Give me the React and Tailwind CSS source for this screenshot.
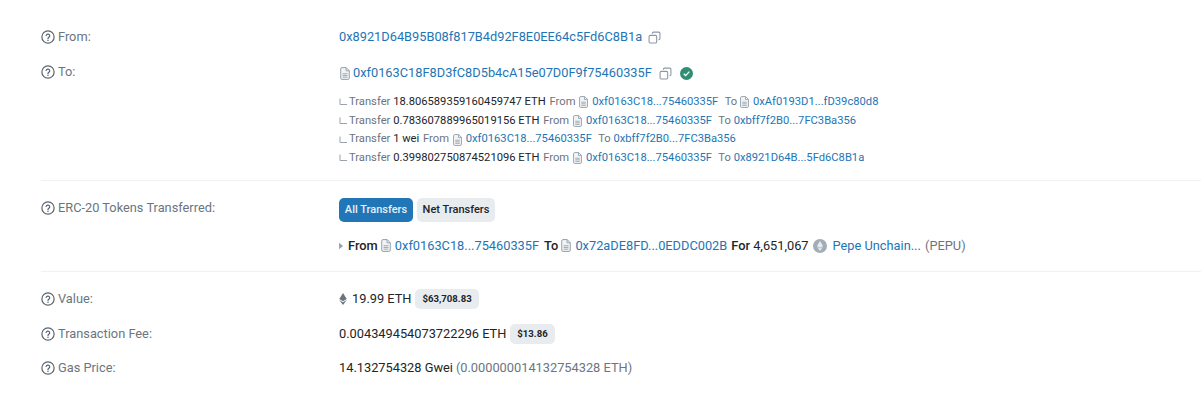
import { Copy } from 'lucide-react';

const LINK = 'text-[#1e75b5]';
const GRAY = 'text-[#6c757e]';
const DARK = 'text-[#212529]';

function Help() {
  return (
    <svg viewBox="0 0 16 16" className="w-[14px] h-[14px] shrink-0 mr-[3px]" fill="none">
      <circle cx="8" cy="8" r="7" stroke="#5c6670" strokeWidth="1.4" />
      <path d="M5.9 6.2a2.1 2.1 0 0 1 4.1.5c0 1.4-2 1.7-2 2.9" stroke="#5c6670" strokeWidth="1.4" strokeLinecap="round" />
      <circle cx="8" cy="11.8" r="0.9" fill="#5c6670" />
    </svg>
  );
}

// contract page icon
function Doc({ className = 'w-[10px] h-[13px]' }) {
  return (
    <svg viewBox="0 0 12 16" className={`shrink-0 ${className}`} fill="none">
      <path d="M2.2.7h5.3l3.8 3.8v9a1.8 1.8 0 0 1-1.8 1.8H2.2A1.8 1.8 0 0 1 .7 13.5V2.5A1.8 1.8 0 0 1 2.2.7Z" fill="#f1f3f5" stroke="#8c98a4" strokeWidth="1.1" />
      <path d="M7.3 1v3.7H11" stroke="#8c98a4" strokeWidth="1" />
      <path d="M3 8.3h6M3 10.4h6M3 12.5h6" stroke="#8c98a4" strokeWidth="1" />
    </svg>
  );
}

function Elbow() {
  return (
    <svg viewBox="0 0 8 8" className="w-[8px] h-[8px] mr-[2px] shrink-0">
      <path d="M1 0.5V6.5H8" stroke="#9aa3ab" strokeWidth="1" fill="none" />
    </svg>
  );
}

function Label({ children, className = '' }) {
  return (
    <div className={`w-[298px] shrink-0 flex items-center ${GRAY} ${className}`}>
      <Help />
      {children}
    </div>
  );
}

function Price({ children }) {
  return (
    <span className={`ml-[4px] px-[7px] h-[20px] flex items-center rounded-[5px] bg-[#e9ecef] text-[9.6px] font-bold ${DARK}`}>
      {children}
    </span>
  );
}

function Transfer({ amount, to, toDoc }) {
  return (
    <div className="h-[18.7px] flex items-center text-[11.2px] whitespace-pre">
      <Elbow />
      <span className={GRAY}>Transfer </span>
      <span className={DARK}>{amount} </span>
      <span className={`${GRAY} ml-[1px]`}>From </span>
      <Doc className="w-[9px] h-[12px] ml-[1px] mr-[4px]" />
      <span className={LINK}>0xf0163C18...75460335F</span>
      <span className={`${GRAY} ml-[1px]`}>  To </span>
      {toDoc && <Doc className="w-[9px] h-[12px] mr-[4px]" />}
      <span className={LINK}>{to}</span>
    </div>
  );
}

export default function App() {
  return (
    <div className="w-[1201px] h-[404px] bg-white pl-[41px] text-[12.8px] overflow-hidden" style={{ fontFamily: 'Roboto, sans-serif' }}>
      {/* From */}
      <div className="flex items-center h-[18px] mt-[28px]">
        <Label>From:</Label>
        <span className={LINK}>0x8921D64B95B08f817B4d92F8E0EE64c5Fd6C8B1a</span>
        <Copy size={13} className="text-[#8c98a4] ml-[6px] -scale-x-100" />
      </div>

      {/* To */}
      <div className="flex mt-[18px]">
        <Label className="h-[16px]">To:</Label>
        <div>
          <div className="flex items-center h-[18px]">
            <Doc className="w-[10px] h-[13px] ml-[1px] mr-[3px]" />
            <span className={LINK}>0xf0163C18F8D3fC8D5b4cA15e07D0F9f75460335F</span>
            <Copy size={13} className="text-[#8c98a4] ml-[7px] -scale-x-100" />
            <svg viewBox="0 0 14 14" className="w-[13px] h-[13px] ml-[8px]">
              <circle cx="7" cy="7" r="7" fill="#2f8f72" />
              <path d="M4 7.3 6.1 9.3 10 5" stroke="#fff" strokeWidth="1.4" fill="none" />
            </svg>
          </div>
          <div className="mt-[11px]">
            <Transfer amount="18.806589359160459747 ETH" to="0xAf0193D1...fD39c80d8" toDoc />
            <Transfer amount="0.783607889965019156 ETH" to="0xbff7f2B0...7FC3Ba356" />
            <Transfer amount="1 wei" to="0xbff7f2B0...7FC3Ba356" />
            <Transfer amount="0.399802750874521096 ETH" to="0x8921D64B...5Fd6C8B1a" />
          </div>
        </div>
      </div>

      <div className="h-px bg-[#eff1f3] mt-[12px]" />

      {/* ERC-20 */}
      <div className="flex mt-[18px]">
        <Label className="h-[18px]">ERC-20 Tokens Transferred:</Label>
        <div className="-mt-[1px]">
          <div className="flex gap-[4px] text-[11px] font-medium">
            <span className="w-[74px] h-[24px] pt-[1px] flex items-center justify-center rounded-[5px] bg-[#2176b8] text-[#e6f0f7]">All Transfers</span>
            <span className={`w-[78px] h-[24px] pt-[1px] flex items-center justify-center rounded-[5px] bg-[#e9ecef] ${DARK}`}>Net Transfers</span>
          </div>
          <div className={`flex items-center h-[18px] mt-[15px] whitespace-pre ${DARK}`}>
            <svg viewBox="0 0 6 8" className="w-[5px] h-[8px] mr-[4px]"><path d="M0 0 5 4 0 8Z" fill="#9aa3ab" /></svg>
            <span className="font-medium">From </span>
            <Doc className="w-[10px] h-[13px] mr-[4px]" />
            <span className={LINK}>0xf0163C18...75460335F</span>
            <span className="font-medium ml-[5px]">To </span>
            <Doc className="w-[10px] h-[13px] mr-[4px]" />
            <span className={LINK}>0x72aDE8FD...0EDDC002B</span>
            <span className="font-medium ml-[4px]">For </span>
            <span>4,651,067</span>
            <svg viewBox="0 0 14 14" className="w-[14px] h-[14px] ml-[4px] mr-[6px]">
              <circle cx="7" cy="7" r="7" fill="#a3adb8" />
              <path d="M7 2 10 7 7 8.8 4 7ZM4 7.8 7 9.6 10 7.8 7 12Z" fill="#e9ecef" />
            </svg>
            <span className={LINK}>Pepe Unchain...</span>
            <span className={`${GRAY} ml-[1px]`}> (PEPU)</span>
          </div>
        </div>
      </div>

      <div className="h-px bg-[#eff1f3] mt-[16px]" />

      {/* Value */}
      <div className="flex items-center h-[20px] mt-[17px]">
        <Label>Value:</Label>
        <svg viewBox="0 0 10 16" className="w-[8px] h-[12px] mr-[5px]">
          <path d="M5 0 10 8 5 11 0 8ZM0 9.2 5 12.2 10 9.2 5 16Z" fill="#6c757e" />
        </svg>
        <span className={DARK}>19.99 ETH</span>
        <Price>$63,708.83</Price>
      </div>

      {/* Fee */}
      <div className="flex items-center h-[20px] mt-[15px]">
        <Label>Transaction Fee:</Label>
        <span className={DARK}>0.004349454073722296 ETH</span>
        <Price>$13.86</Price>
      </div>

      {/* Gas */}
      <div className="flex items-center h-[18px] mt-[15px]">
        <Label>Gas Price:</Label>
        <span className={DARK}>14.132754328 Gwei</span>
        <span className={`${GRAY} ml-[3px]`}>(0.000000014132754328 ETH)</span>
      </div>
    </div>
  );
}
